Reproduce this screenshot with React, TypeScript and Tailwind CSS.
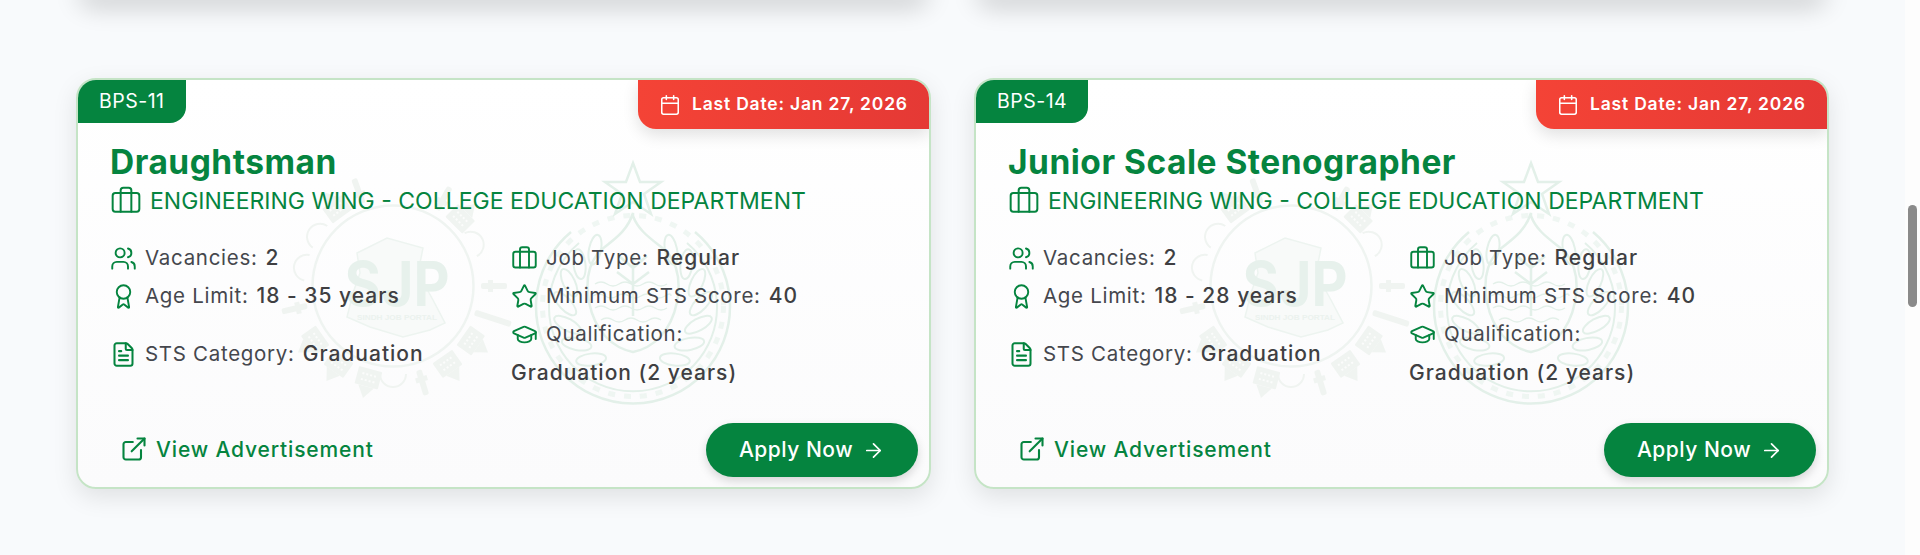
import { ArrowRight, Award, Briefcase, Calendar, ExternalLink, FileText, GraduationCap, Star, Users } from "lucide-react";
import type { ReactNode } from "react";

const jobs = [
  { grade: "BPS-11", title: "Draughtsman", age: "18 - 35 years" },
  { grade: "BPS-14", title: "Junior Scale Stenographer", age: "18 - 28 years" },
];

// silhouettes round the portal logo: [angle, kind]
const skyline: [number, number][] = [
  [-165, 1], [-145, 1], [-125, 1], [-103, 0], [-78, 2], [-56, 2], [-36, 1], [-20, 0],
  [30, 0], [45, 1], [62, 2], [90, 0], [108, 3], [125, 1], [145, 1], [163, 0], [180, 2],
];

const wreath = [34, 52, 70, 88, 106, 124, 142];

function PortalLogo() {
  return (
    <svg viewBox="0 0 260 260" className="w-[260px] h-[260px] shrink-0" fill="none">
      <path
        d="M94 97 L124 82 L160 92 L155 117 L170 144 L182 167 L167 174 L140 181 L107 171 L84 161 L90 137 L97 117 Z"
        fill="#f8faf9"
        stroke="#edf4f0"
        strokeWidth="1.5"
      />
      <circle cx="130" cy="130" r="80.5" stroke="#eff4f1" strokeWidth="2.5" />
      {skyline.map(([angle, kind]) => (
        <g key={angle} transform={`rotate(${angle} 130 130)`} fill="#f0f4f1" stroke="#f0f4f1">
          {kind === 0 && (
            <>
              <rect x="127" y="16" width="6" height="26" rx="2" stroke="none" />
              <rect x="124" y="30" width="12" height="5" stroke="none" />
            </>
          )}
          {kind === 1 && (
            <>
              <rect x="118" y="26" width="24" height="18" rx="1" stroke="none" />
              <path d="M122 26 L130 14 L138 26 Z" stroke="none" />
              <path d="M123 32 h14 M123 38 h14" stroke="#fbfcfb" strokeWidth="2" strokeDasharray="2 2" />
            </>
          )}
          {kind === 2 && <path d="M117 42 A13 13 0 0 1 143 42" fill="none" strokeWidth="2" />}
          {kind === 3 && <rect x="127" y="6" width="6" height="38" rx="2" stroke="none" />}
        </g>
      ))}
      <text x="134" y="150" textAnchor="middle" textLength="105" lengthAdjust="spacingAndGlyphs" fontFamily="Inter, sans-serif" fontWeight="700" fontSize="62" fill="#e7f1ec">
        SJP
      </text>
      <text x="134" y="164" textAnchor="middle" textLength="80" lengthAdjust="spacingAndGlyphs" fontFamily="'Liberation Sans', sans-serif" fontWeight="700" fontSize="8" fill="#ebf2ee">
        SINDH JOB PORTAL
      </text>
    </svg>
  );
}

function SindhSeal() {
  return (
    <svg viewBox="0 0 220 260" className="w-[220px] h-[260px] shrink-0" fill="none" stroke="#e3f0e9">
      <path d="M110 7 L117 26 H138 L121 38 L128 58 L110 46 L92 58 L99 38 L82 26 H103 Z" strokeWidth="2.5" />
      <path d="M48 76 A97 97 0 1 0 172 76" strokeWidth="2.5" />
      <path d="M56 87 A84 84 0 1 0 164 87" strokeWidth="2" />
      <circle cx="110" cy="150" r="90.5" strokeWidth="5" strokeDasharray="7 9" opacity="0.55" />
      {wreath.map((a) => {
        const rad = (a * Math.PI) / 180;
        const dx = 68 * Math.sin(rad);
        const dy = -68 * Math.cos(rad);
        return (
          <g key={a} strokeWidth="2">
            <ellipse cx={110 + dx} cy={150 + dy} rx="15" ry="6" transform={`rotate(${a + 45} ${110 + dx} ${150 + dy})`} />
            <ellipse cx={110 - dx} cy={150 + dy} rx="15" ry="6" transform={`rotate(${-a - 45} ${110 - dx} ${150 + dy})`} />
          </g>
        );
      })}
      <path d="M110 57 C104 76 90 84 78 94 C66 106 62 124 66 146 C72 176 90 192 110 196 C130 192 148 176 154 146 C158 124 154 106 142 94 C130 84 116 76 110 60 Z" strokeWidth="2.5" />
      <path d="M72 128 q6 -4 12 0 t12 0 t12 0 t12 0 t12 0 t12 0 M70 140 q6 -4 12 0 t12 0 t12 0 t12 0 t12 0 t12 0 t6 0 M72 152 q6 -4 12 0 t12 0 t12 0 t12 0 t12 0 t12 0 M78 164 q6 -4 12 0 t12 0 t12 0 t12 0 t12 0" strokeWidth="1.5" />
      <path d="M110 98 V160 M110 112 L96 100 M110 112 L124 100 M110 128 L94 116 M110 128 L126 116" strokeWidth="2.5" />
    </svg>
  );
}

function Watermark() {
  return (
    <div className="absolute left-[185px] top-[76px] flex pointer-events-none select-none">
      <PortalLogo />
      <SindhSeal />
    </div>
  );
}

function Info({ icon, label, value }: { icon: ReactNode; label: string; value?: string }) {
  return (
    <div className="flex items-center">
      <span className="w-[35px] flex text-[#05843f]">{icon}</span>
      <span className="text-[#45474d]">{label}</span>
      {value && <span className="ml-[8px] font-medium text-[21px] tracking-[1px] text-[#3f3f42]">{value}</span>}
    </div>
  );
}

function JobCard({ grade, title, age }: { grade: string; title: string; age: string }) {
  const iconClass = "w-[27px] h-[27px]";
  return (
    <div className="relative h-[411px] rounded-[20px] border-2 border-[#c5e4c6] bg-gradient-to-b from-white to-[#fbfbfc] shadow-[0_8px_24px_rgba(0,0,0,0.1)] overflow-hidden font-['Inter',sans-serif]">
      <Watermark />
      <div className="absolute left-0 top-0 h-[43px] px-[21px] flex items-center rounded-br-[16px] bg-[#05843f] text-white text-[19.5px] tracking-[0.5px]">
        {grade}
      </div>
      <div className="absolute right-0 top-0 h-[49px] w-[291px] flex items-center gap-[11px] pl-[21px] rounded-bl-[18px] bg-gradient-to-r from-[#f44336] to-[#e53935] shadow-[0_6px_16px_rgba(0,0,0,0.12)] text-white text-[17.5px] font-semibold tracking-[0.8px]">
        <Calendar className="w-[22px] h-[22px]" strokeWidth={1.7} />
        <span>Last Date: Jan 27, 2026</span>
      </div>
      <div className="relative pl-[32px] pt-[62px]">
        <h3 className="text-[33.5px] leading-[40px] font-bold tracking-[0.5px] text-[#05843f]">{title}</h3>
        <div className="mt-[3px] flex items-center gap-[8px] text-[23px] leading-[32px] text-[#05843f]">
          <Briefcase className="w-[32px] h-[32px]" strokeWidth={1.5} />
          <span>ENGINEERING WING - COLLEGE EDUCATION DEPARTMENT</span>
        </div>
        <div className="mt-[22px] grid grid-cols-[401px_1fr] text-[20.5px] tracking-[0.7px]">
          <div className="flex flex-col">
            <div className="h-[38px] flex items-center">
              <Info icon={<Users className={iconClass} strokeWidth={1.7} />} label="Vacancies:" value="2" />
            </div>
            <div className="h-[38px] flex items-center">
              <Info icon={<Award className={iconClass} strokeWidth={1.7} />} label="Age Limit:" value={age} />
            </div>
            <div className="h-[78px] flex items-center">
              <Info icon={<FileText className={iconClass} strokeWidth={1.8} />} label="STS Category:" value="Graduation" />
            </div>
          </div>
          <div className="flex flex-col">
            <div className="h-[38px] flex items-center">
              <Info icon={<Briefcase className={iconClass} strokeWidth={1.7} />} label="Job Type:" value="Regular" />
            </div>
            <div className="h-[38px] flex items-center">
              <Info icon={<Star className={iconClass} strokeWidth={1.7} />} label="Minimum STS Score:" value="40" />
            </div>
            <div className="h-[38px] flex items-center">
              <Info icon={<GraduationCap className={iconClass} strokeWidth={1.7} />} label="Qualification:" />
            </div>
            <div className="h-[40px] flex items-center font-medium text-[21px] tracking-[1px] text-[#3f3f42]">Graduation (2 years)</div>
          </div>
        </div>
      </div>
      <a className="absolute left-[42px] bottom-[22px] flex items-center gap-[8px] text-[21px] font-medium tracking-[0.85px] text-[#05843f]">
        <ExternalLink className="w-[28px] h-[28px]" strokeWidth={1.8} />
        View Advertisement
      </a>
      <a className="absolute right-[11px] bottom-[10px] h-[54px] w-[212px] flex items-center justify-center gap-[9px] rounded-full bg-[#05843f] text-white text-[21px] font-medium tracking-[0.5px] shadow-[0_4px_10px_rgba(0,0,0,0.15)]">
        Apply Now
        <ArrowRight className="w-[23px] h-[23px]" strokeWidth={1.8} />
      </a>
    </div>
  );
}

export default function App() {
  return (
    <div className="relative h-[555px] overflow-hidden bg-[#f8fafc]">
      <div className="pl-[76px] pr-[91px]">
        <div className="-mt-[20px] h-[20px] grid grid-cols-2 gap-[43px]">
          <div className="rounded-b-[20px] bg-white shadow-[0_8px_24px_rgba(0,0,0,0.18)]" />
          <div className="rounded-b-[20px] bg-white shadow-[0_8px_24px_rgba(0,0,0,0.18)]" />
        </div>
        <div className="mt-[78px] grid grid-cols-2 gap-[43px]">
          {jobs.map((job) => (
            <JobCard key={job.grade} {...job} />
          ))}
        </div>
      </div>
      <div className="absolute right-0 top-0 bottom-0 w-[15px] bg-[#fdfdfd]">
        <div className="mt-[205px] mx-auto h-[102px] w-[9px] rounded-full bg-[#8a8a8a]" />
      </div>
    </div>
  );
}
